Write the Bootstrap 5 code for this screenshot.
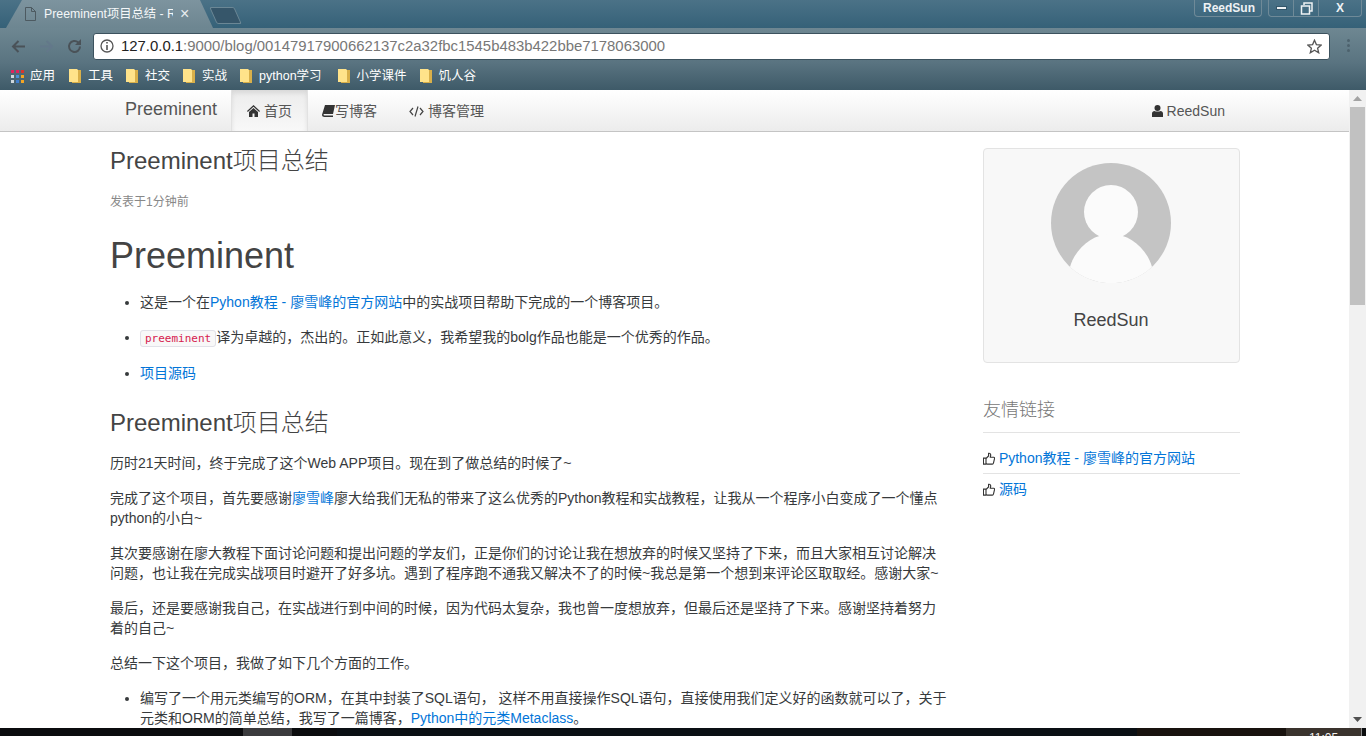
<!DOCTYPE html>
<html lang="zh-CN">
<head>
    <meta charset="UTF-8">
    <title>Preeminent项目总结</title>
    <link href="https://cdn.jsdelivr.net/npm/bootstrap@5.3.0/dist/css/bootstrap.min.css" rel="stylesheet">
    <style>
        html, body { height: 736px; overflow: hidden; }
        body {
            font-family: "Liberation Sans", "Noto Sans CJK SC", sans-serif;
            font-size: 14px;
            line-height: 20px;
            color: #373a3c;
            background: #fff;
        }
        a { color: #0275d8; text-decoration: none; }

        /* browser frame */
        .tab-strip {
            height: 28px;
            background: linear-gradient(#4b7287, #356178);
            color: #fff;
        }
        .page-tab {
            width: 207px;
            height: 28px;
            margin-left: 6px;
            padding-left: 19px;
            background: linear-gradient(#7d949f, #6d8691);
            clip-path: polygon(0 100%, 16px 0, 194px 0, 207px 100%);
            font-size: 12.3px;
            white-space: nowrap;
        }
        .tab-title { width: 129px; margin-left: 8px; overflow: hidden; color: #f4f7f8; }
        .tab-close { margin-left: 7px; font-size: 16px; line-height: 1; color: #e8edf0; }
        .new-tab {
            width: 25px;
            height: 17px;
            margin: 7px 0 0 0;
            background: #36566a;
            border: 1px solid #6b8795;
            border-radius: 2px;
            transform: skewX(24deg);
        }
        .user-chip {
            width: 68px;
            height: 17px;
            margin-right: 6px;
            padding-left: 2px;
            border: 1px solid #6f8a98;
            border-top: 0;
            border-radius: 0 0 4px 4px;
            font-size: 12px;
            font-weight: 700;
            line-height: 17px;
            text-align: center;
            color: #eef2f4;
        }
        .win-btns {
            height: 17px;
            margin-right: 4px;
            border: 1px solid #6f8a98;
            border-top: 0;
            border-radius: 0 0 4px 4px;
        }
        .win-btn { height: 16px; border-right: 1px solid #6f8a98; color: #eef2f4; }
        .win-btn:last-child { border-right: 0; }
        .win-min { width: 25px; }
        .win-max { width: 25px; }
        .win-close { width: 42px; font-size: 12px; font-weight: 700; line-height: 16px; text-align: center; }
        .min-bar { width: 11px; height: 4px; background: #eef2f4; border: 1px solid #33566a; }

        .tool-row {
            height: 34px;
            background: linear-gradient(#6e8792, #5a7481);
            padding: 2px 0 0 10px;
        }
        .nav-ico { width: 17px; height: 17px; margin-right: 11px; flex: none; }
        .url-box {
            width: 1237px;
            height: 27px;
            margin-left: -1px;
            padding: 0 7px 0 6px;
            background: #fff;
            border: 1px solid #3c525e;
            border-radius: 3px;
            font-size: 14.9px;
            color: #777;
        }
        .url-host { color: #222; }
        .url-text { margin-left: 7px; }
        .kebab { width: 3px; margin-left: 17px; }
        .kebab i { display: block; width: 3px; height: 3px; margin-bottom: 2px; background: #4d626d; border-radius: 50%; }

        .marks-row {
            height: 28px;
            background: linear-gradient(#5a7481, #3e5a68);
            padding-left: 11px;
            font-size: 12.5px;
            color: #fff;
        }
        .mark-item { margin-right: 13px; white-space: nowrap; }
        .mark-item svg { margin-right: 7px; }
        .mark-apps { margin-right: 14px; }
        .mark-apps svg { margin-right: 6px; }
        .mark-wide { margin-right: 16px; }

        /* page viewport */
        .view-area { height: 638px; overflow: hidden; }
        .page-col { width: 1349px; overflow: hidden; }
        .scroll-rail { width: 17px; background: #f1f1f1; padding: 0 1px; }
        .rail-arrow { height: 17px; }
        .rail-thumb { width: 15px; height: 198px; background: #c1c1c1; }
        .rail-fill { flex: 1; }

        .top-nav {
            height: 42px;
            padding-left: 125px;
            background: linear-gradient(#fff, #ececec);
            border-bottom: 1px solid #c4c4c4;
        }
        .nav-brand { width: 106px; font-size: 18px; line-height: 38px; color: #555; }
        .nav-tab { height: 41px; line-height: 42px; color: #555; white-space: nowrap; }
        .nav-tab svg { vertical-align: -1px; }
        .nav-active {
            width: 77px;
            padding-left: 15px;
            background: linear-gradient(#ececec, #f8f8f8);
            box-shadow: inset 0 3px 5px rgba(0, 0, 0, .09);
            border-left: 1px solid #e2e2e2;
            border-right: 1px solid #e2e2e2;
        }
        .nav-write { padding-left: 14px; width: 86px; }
        .nav-manage { padding-left: 15px; }
        .nav-user { margin-left: auto; margin-right: 124px; }

        .page-body { padding: 16px 0 0 110px; }
        .post-col { width: 838px; flex: none; }
        .side-col { width: 257px; margin-left: 35px; flex: none; }

        .post-title { font-size: 24px; line-height: 26px; font-weight: 300; margin: 0 0 18px; color: #444; }
        .post-col .post-date { font-size: 12px; line-height: 20px; color: #888; margin: 0 0 24px; }
        .post-h1 { font-size: 36px; line-height: 40px; font-weight: 400; margin: 0 0 16px; color: #444; }
        .post-h2 { font-size: 24px; line-height: 26px; font-weight: 300; margin: 27px 0 17px; color: #444; }
        .post-col p { margin: 0 0 15px; }
        .post-col .code-line { margin-bottom: 16px; }
        .post-col ul { margin: 0 0 15px; padding-left: 30px; }
        .post-col .post-list-tight { margin-bottom: 0; }
        .inline-code {
            font-family: "DejaVu Sans Mono", "Liberation Mono", monospace;
            font-size: 11px;
            line-height: 1;
            padding: 1px 4px;
            color: #d6204e;
            background: #f8f8f8;
            border: 1px solid #e1e1e8;
            border-radius: 3px;
        }

        .profile-box {
            height: 215px;
            padding: 14px 1px 0 0;
            background: #f8f8f8;
            border: 1px solid #e3e3e3;
            border-radius: 4px;
            text-align: center;
        }
        .profile-name { font-size: 18px; line-height: 20px; margin-top: 27px; color: #444; }
        .links-title {
            margin: 37px 0 0;
            padding-bottom: 12px;
            font-family: "Liberation Serif", "Noto Sans CJK SC", serif;
            font-size: 18px;
            line-height: 20px;
            font-weight: 300;
            color: #777;
            border-bottom: 1px solid #e3e3e3;
        }
        .link-row { height: 41px; padding-top: 15px; border-bottom: 1px solid #e3e3e3; white-space: nowrap; }
        .link-row + .link-row { height: auto; padding-top: 5px; border-bottom: 0; }
        .link-row svg { vertical-align: -2px; }

        /* desktop taskbar, cut by the capture */
        .task-bar { height: 8px; background: #0b0c0e; overflow: hidden; }
        .task-active { width: 49px; margin-left: 243px; background: #3b3b3d; }
        .task-mid { width: 800px; margin-left: 45px; background: #0a0f14; }
        .task-warm { width: 149px; background: #18120e; }
        .task-clock {
            width: 76px;
            padding-top: 3px;
            background: #3a332d;
            border-right: 1px solid #8a8a8a;
            color: #f2f2f2;
            font-size: 12px;
            line-height: 14px;
            text-align: center;
        }
    </style>
</head>
<body>
    <div class="tab-strip d-flex align-items-start">
        <div class="page-tab d-flex align-items-center">
            <svg width="11" height="14" viewBox="0 0 11 14"><path d="M.5.5h6l4 4v9H.5z M6.5.5v4h4" fill="none" stroke="#4d5a61"/></svg>
            <span class="tab-title">Preeminent项目总结 - R</span>
            <span class="tab-close">×</span>
        </div>
        <div class="new-tab"></div>
        <div class="user-chip ms-auto">ReedSun</div>
        <div class="win-btns d-flex">
            <div class="win-btn win-min d-flex align-items-center justify-content-center"><div class="min-bar"></div></div>
            <div class="win-btn win-max d-flex align-items-center justify-content-center">
                <svg width="13" height="13" viewBox="0 0 13 13"><path d="M4 3V1h8v8h-2M1.500 4h8v8h-8z" fill="none" stroke="#eef2f4" stroke-width="1.500"/></svg>
            </div>
            <div class="win-btn win-close">X</div>
        </div>
    </div>

    <div class="tool-row d-flex align-items-center">
        <svg class="nav-ico" viewBox="0 0 17 17"><path d="M15 8.500H3M8.500 3 3 8.500 8.500 14" fill="none" stroke="#4a5258" stroke-width="2"/></svg>
        <svg class="nav-ico" viewBox="0 0 17 17"><path d="M2 8.500h12M8.500 3 14 8.500 8.500 14" fill="none" stroke="#63788a" stroke-width="2"/></svg>
        <svg class="nav-ico" viewBox="0 0 17 17"><path d="M14 8.500a5.500 5.500 0 1 1-1.700-4" fill="none" stroke="#4a5258" stroke-width="2"/><path d="M15 1v6H9z" fill="#4a5258"/></svg>
        <div class="url-box d-flex align-items-center">
            <svg width="14" height="14" viewBox="0 0 14 14"><circle cx="7" cy="7" r="6" fill="none" stroke="#555" stroke-width="1.300"/><path d="M6.200 3h1.600v1.600H6.200zM6.200 6h1.600v5H6.200z" fill="#555"/></svg>
            <span class="url-text"><span class="url-host">127.0.0.1</span>:9000/blog/00147917900662137c2a32fbc1545b483b422bbe7178063000</span>
            <svg class="ms-auto" width="15" height="15" viewBox="0 0 15 15"><path d="M7.500 1.200 9.400 5.600l4.800.4-3.600 3.200 1.100 4.600-4.200-2.500-4.200 2.500 1.100-4.600L.8 6l4.800-.4z" fill="none" stroke="#555" stroke-width="1.300"/></svg>
        </div>
        <div class="kebab"><i></i><i></i><i></i></div>
    </div>

    <div class="marks-row d-flex align-items-center">
        <div class="mark-item mark-apps d-flex align-items-center">
            <svg width="13" height="13" viewBox="0 0 13 13">
                <path d="M0 0h3v3H0z" fill="#e0245e"/><path d="M5 0h3v3H5z" fill="#e0245e"/><path d="M10 0h3v3h-3z" fill="#d8342f"/>
                <path d="M0 5h3v3H0z" fill="#cfd8dc"/><path d="M5 5h3v3H5z" fill="#4a90d9"/><path d="M10 5h3v3h-3z" fill="#f4a522"/>
                <path d="M0 10h3v3H0z" fill="#cfd8dc"/><path d="M5 10h3v3H5z" fill="#3f7fd0"/><path d="M10 10h3v3h-3z" fill="#f4a522"/>
            </svg>应用
        </div>
        <div class="mark-item d-flex align-items-center"><svg width="12" height="14" viewBox="0 0 12 14"><path d="M0 0h8l1 1v12H0z" fill="#ffe38a"/><path d="M9 1h3v13H3v-1h6z" fill="#d9b04a"/></svg>工具</div>
        <div class="mark-item d-flex align-items-center"><svg width="12" height="14" viewBox="0 0 12 14"><path d="M0 0h8l1 1v12H0z" fill="#ffe38a"/><path d="M9 1h3v13H3v-1h6z" fill="#d9b04a"/></svg>社交</div>
        <div class="mark-item d-flex align-items-center"><svg width="12" height="14" viewBox="0 0 12 14"><path d="M0 0h8l1 1v12H0z" fill="#ffe38a"/><path d="M9 1h3v13H3v-1h6z" fill="#d9b04a"/></svg>实战</div>
        <div class="mark-item mark-wide d-flex align-items-center"><svg width="12" height="14" viewBox="0 0 12 14"><path d="M0 0h8l1 1v12H0z" fill="#ffe38a"/><path d="M9 1h3v13H3v-1h6z" fill="#d9b04a"/></svg>python学习</div>
        <div class="mark-item d-flex align-items-center"><svg width="12" height="14" viewBox="0 0 12 14"><path d="M0 0h8l1 1v12H0z" fill="#ffe38a"/><path d="M9 1h3v13H3v-1h6z" fill="#d9b04a"/></svg>小学课件</div>
        <div class="mark-item d-flex align-items-center"><svg width="12" height="14" viewBox="0 0 12 14"><path d="M0 0h8l1 1v12H0z" fill="#ffe38a"/><path d="M9 1h3v13H3v-1h6z" fill="#d9b04a"/></svg>饥人谷</div>
    </div>

    <div class="view-area d-flex">
        <div class="page-col">
            <nav class="top-nav d-flex">
                <div class="nav-brand">Preeminent</div>
                <div class="nav-tab nav-active">
                    <svg width="13" height="12" viewBox="0 0 13 12"><path d="M6.500 0 13 6l-.8.9L6.500 1.800.8 6.900 0 6zM2 7l4.500-4L11 7v5H7.500V8.500h-2V12H2z" fill="#333"/></svg>
                    首页
                </div>
                <div class="nav-tab nav-write">
                    <svg width="13" height="12" viewBox="0 0 13 12"><path d="M3 0h10l-2 9H2.500c-.8 0-1 .5-1 .8 0 .4.300.7 1 .7H11v1.500H2.500C1 12 0 11 0 9.700z" fill="#333"/></svg>写博客
                </div>
                <div class="nav-tab nav-manage">
                    <svg width="15" height="11" viewBox="0 0 15 11"><path d="M4 2 1 5.500 4 9M11 2l3 3.500L11 9M9 .5 6 10.500" fill="none" stroke="#444" stroke-width="1.200"/></svg>
                    博客管理
                </div>
                <div class="nav-tab nav-user">
                    <svg width="11" height="12" viewBox="0 0 11 12"><circle cx="5.500" cy="3" r="3" fill="#333"/><path d="M0 12V8.500C0 7 1.200 6 2.500 6c1 .8 5 .8 6 0C9.800 6 11 7 11 8.500V12z" fill="#333"/></svg>
                    ReedSun
                </div>
            </nav>

            <div class="page-body d-flex">
                <article class="post-col">
                    <h3 class="post-title">Preeminent项目总结</h3>
                    <p class="post-date">发表于1分钟前</p>
                    <h1 class="post-h1">Preeminent</h1>
                    <ul>
                        <li><p>这是一个在<a href="#">Pyhon教程 - 廖雪峰的官方网站</a>中的实战项目帮助下完成的一个博客项目。</p></li>
                        <li><p class="code-line"><code class="inline-code">preeminent</code>译为卓越的，杰出的。正如此意义，我希望我的bolg作品也能是一个优秀的作品。</p></li>
                        <li><p><a href="#">项目源码</a></p></li>
                    </ul>
                    <h2 class="post-h2">Preeminent项目总结</h2>
                    <p>历时21天时间，终于完成了这个Web APP项目。现在到了做总结的时候了~</p>
                    <p>完成了这个项目，首先要感谢<a href="#">廖雪峰</a>廖大给我们无私的带来了这么优秀的Python教程和实战教程，让我从一个程序小白变成了一个懂点python的小白~</p>
                    <p>其次要感谢在廖大教程下面讨论问题和提出问题的学友们，正是你们的讨论让我在想放弃的时候又坚持了下来，而且大家相互讨论解决问题，也让我在完成实战项目时避开了好多坑。遇到了程序跑不通我又解决不了的时候~我总是第一个想到来评论区取取经。感谢大家~</p>
                    <p>最后，还是要感谢我自己，在实战进行到中间的时候，因为代码太复杂，我也曾一度想放弃，但最后还是坚持了下来。感谢坚持着努力着的自己~</p>
                    <p>总结一下这个项目，我做了如下几个方面的工作。</p>
                    <ul class="post-list-tight">
                        <li>编写了一个用元类编写的ORM，在其中封装了SQL语句， 这样不用直接操作SQL语句，直接使用我们定义好的函数就可以了，关于元类和ORM的简单总结，我写了一篇博客，<a href="#">Python中的元类Metaclass</a>。</li>
                    </ul>
                </article>

                <aside class="side-col">
                    <div class="profile-box">
                        <svg width="120" height="120" viewBox="0 0 120 120">
                            <circle cx="60" cy="60" r="60" fill="#c4c4c4"/>
                            <circle cx="60" cy="49" r="27" fill="#fbfbfb"/>
                            <path d="M19 104C24 86 41 71 60 71s36 15 41 33a60 60 0 0 1-82 0z" fill="#fbfbfb"/>
                        </svg>
                        <div class="profile-name">ReedSun</div>
                    </div>
                    <h4 class="links-title">友情链接</h4>
                    <div class="link-row">
                        <svg width="12" height="13" viewBox="0 0 14 14"><path d="M.5 6.500h3v7h-3zM3.500 7 6.500 4V1c1.500-.5 2.500.5 2.500 2L8.500 5.500h4c1 0 1.200 1 1 1.500l-1.300 5.500c-.2.700-.7 1-1.200 1H5c-.7 0-1-.5-1.500-.5" fill="none" stroke="#333" stroke-width="1.300"/></svg>
                        <a href="#">Python教程 - 廖雪峰的官方网站</a>
                    </div>
                    <div class="link-row">
                        <svg width="12" height="13" viewBox="0 0 14 14"><path d="M.5 6.500h3v7h-3zM3.500 7 6.500 4V1c1.500-.5 2.500.5 2.500 2L8.500 5.500h4c1 0 1.200 1 1 1.500l-1.300 5.500c-.2.700-.7 1-1.200 1H5c-.7 0-1-.5-1.500-.5" fill="none" stroke="#333" stroke-width="1.300"/></svg>
                        <a href="#">源码</a>
                    </div>
                </aside>
            </div>
        </div>
        <div class="scroll-rail d-flex flex-column align-items-center">
            <div class="rail-arrow d-flex align-items-center justify-content-center"><svg width="9" height="5" viewBox="0 0 9 5"><path d="M4.500 0 9 5H0z" fill="#a3a3a3"/></svg></div>
            <div class="rail-thumb"></div>
            <div class="rail-fill"></div>
            <div class="rail-arrow d-flex align-items-center justify-content-center"><svg width="9" height="5" viewBox="0 0 9 5"><path d="M0 0h9L4.500 5z" fill="#505050"/></svg></div>
        </div>
    </div>

    <div class="task-bar d-flex">
        <div class="task-active"></div>
        <div class="task-mid"></div>
        <div class="task-warm"></div>
        <div class="task-clock">11:05</div>
    </div>

    <script src="https://cdn.jsdelivr.net/npm/bootstrap@5.3.0/dist/js/bootstrap.bundle.min.js"></script>
</body>
</html>
